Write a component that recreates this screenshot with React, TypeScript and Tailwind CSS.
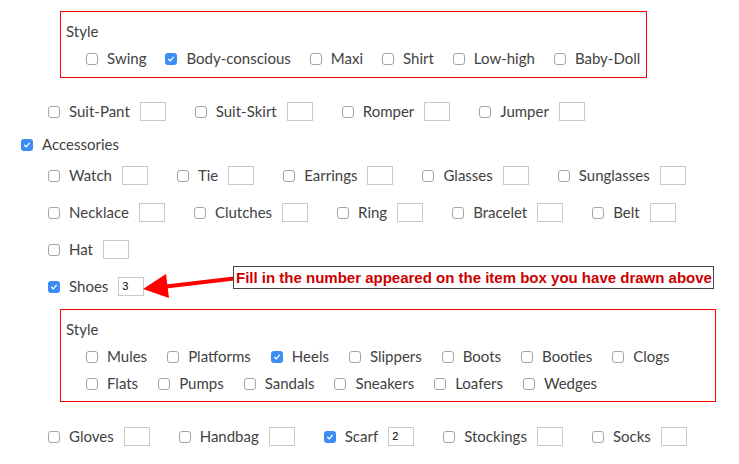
import React from "react";

type Item = { label: string; checked?: boolean; value?: string };

const topStyles: Item[] = [
  { label: "Swing" },
  { label: "Body-conscious", checked: true },
  { label: "Maxi" },
  { label: "Shirt" },
  { label: "Low-high" },
  { label: "Baby-Doll" },
];

const suitRow: Item[] = [
  { label: "Suit-Pant" },
  { label: "Suit-Skirt" },
  { label: "Romper" },
  { label: "Jumper" },
];

const accRows: Item[][] = [
  [{ label: "Watch" }, { label: "Tie" }, { label: "Earrings" }, { label: "Glasses" }, { label: "Sunglasses" }],
  [{ label: "Necklace" }, { label: "Clutches" }, { label: "Ring" }, { label: "Bracelet" }, { label: "Belt" }],
  [{ label: "Hat" }],
];

const shoeStyles1: Item[] = [
  { label: "Mules" },
  { label: "Platforms" },
  { label: "Heels", checked: true },
  { label: "Slippers" },
  { label: "Boots" },
  { label: "Booties" },
  { label: "Clogs" },
];

const shoeStyles2: Item[] = [
  { label: "Flats" },
  { label: "Pumps" },
  { label: "Sandals" },
  { label: "Sneakers" },
  { label: "Loafers" },
  { label: "Wedges" },
];

const lastRow: Item[] = [
  { label: "Gloves" },
  { label: "Handbag" },
  { label: "Scarf", checked: true, value: "2" },
  { label: "Stockings" },
  { label: "Socks" },
];

function Check({ checked }: { checked?: boolean }) {
  if (checked) {
    return (
      <span className="w-[12px] h-[12px] rounded-[3px] bg-[#3d8bf5] flex items-center justify-center shrink-0">
        <svg viewBox="0 0 12 12" className="w-[10px] h-[10px]" fill="none" stroke="white" strokeWidth={1.6} strokeLinecap="round" strokeLinejoin="round">
          <path d="M3.2 6.3 L5.2 8.3 L8.8 3.8" />
        </svg>
      </span>
    );
  }
  return <span className="w-[12px] h-[12px] rounded-[3px] border border-[#a3a3a3] bg-white shrink-0" />;
}

function NumBox({ value }: { value?: string }) {
  return (
    <span className="w-[26px] h-[19px] border border-[#c9c9c9] bg-white ml-[10px] flex items-center pl-[3px] text-[11px] text-black shrink-0" style={{ fontFamily: "Arial, 'Liberation Sans', sans-serif" }}>
      {value}
    </span>
  );
}

function Opt({ item, box }: { item: Item; box?: boolean }) {
  return (
    <div className="flex items-center h-[19px]">
      <Check checked={item.checked} />
      <span className="ml-[9px] whitespace-nowrap">{item.label}</span>
      {box && <NumBox value={item.value} />}
    </div>
  );
}

function BoxRow({ items }: { items: Item[] }) {
  return (
    <div className="flex items-center gap-[29px] ml-[48px]">
      {items.map(i => <Opt key={i.label} item={i} box />)}
    </div>
  );
}

export default function App() {
  return (
    <div
      className="relative w-[739px] h-[464px] bg-white text-[#424242] text-[15px] leading-[19px] overflow-hidden"
      style={{ fontFamily: "Lato, 'Open Sans', sans-serif" }}
    >
      <div className="pt-[11px] flex flex-col">
        <div className="ml-[60px] w-[587px] border border-[#f00] pl-[5px] pt-[10px] pb-[9px]">
          <div className="h-[19px]">Style</div>
          <div className="flex items-center gap-[19px] ml-[20px] mt-[8px]">
            {topStyles.map(i => <Opt key={i.label} item={i} />)}
          </div>
        </div>

        <div className="mt-[24px]">
          <BoxRow items={suitRow} />
        </div>

        <div className="mt-[14px] ml-[21px] flex items-center h-[19px]">
          <Check checked />
          <span className="ml-[9px]">Accessories</span>
        </div>

        <div className="mt-[12px]"><BoxRow items={accRows[0]} /></div>
        <div className="mt-[18px]"><BoxRow items={accRows[1]} /></div>
        <div className="mt-[18px]"><BoxRow items={accRows[2]} /></div>
        <div className="mt-[18px]">
          <BoxRow items={[{ label: "Shoes", checked: true, value: "3" }]} />
        </div>

        <div className="mt-[13px] ml-[60px] w-[656px] border border-[#f00] pl-[5px] pt-[10px] pb-[8px]">
          <div className="h-[19px]">Style</div>
          <div className="flex items-center gap-[20px] ml-[20px] mt-[8px]">
            {shoeStyles1.map(i => <Opt key={i.label} item={i} />)}
          </div>
          <div className="flex items-center gap-[20px] ml-[20px] mt-[8px]">
            {shoeStyles2.map(i => <Opt key={i.label} item={i} />)}
          </div>
        </div>

        <div className="mt-[25px]"><BoxRow items={lastRow} /></div>
      </div>

      {/* annotation arrow + callout */}
      <svg className="absolute left-0 top-0 w-[739px] h-[464px] pointer-events-none" viewBox="0 0 739 464">
        <path d="M234 278.5 L166 286.5" stroke="#f00" strokeWidth={4} />
        <path d="M143 289 L166 274 L169 298 Z" fill="#f00" />
      </svg>
      <div
        className="absolute left-[233px] top-[266px] w-[481px] h-[23px] border border-[#444] bg-white flex items-center pl-[2px] text-[#c00] text-[15px] font-bold whitespace-nowrap"
        style={{ fontFamily: "Arial, 'Liberation Sans', sans-serif" }}
      >
        Fill in the number appeared on the item box you have drawn above
      </div>
    </div>
  );
}
